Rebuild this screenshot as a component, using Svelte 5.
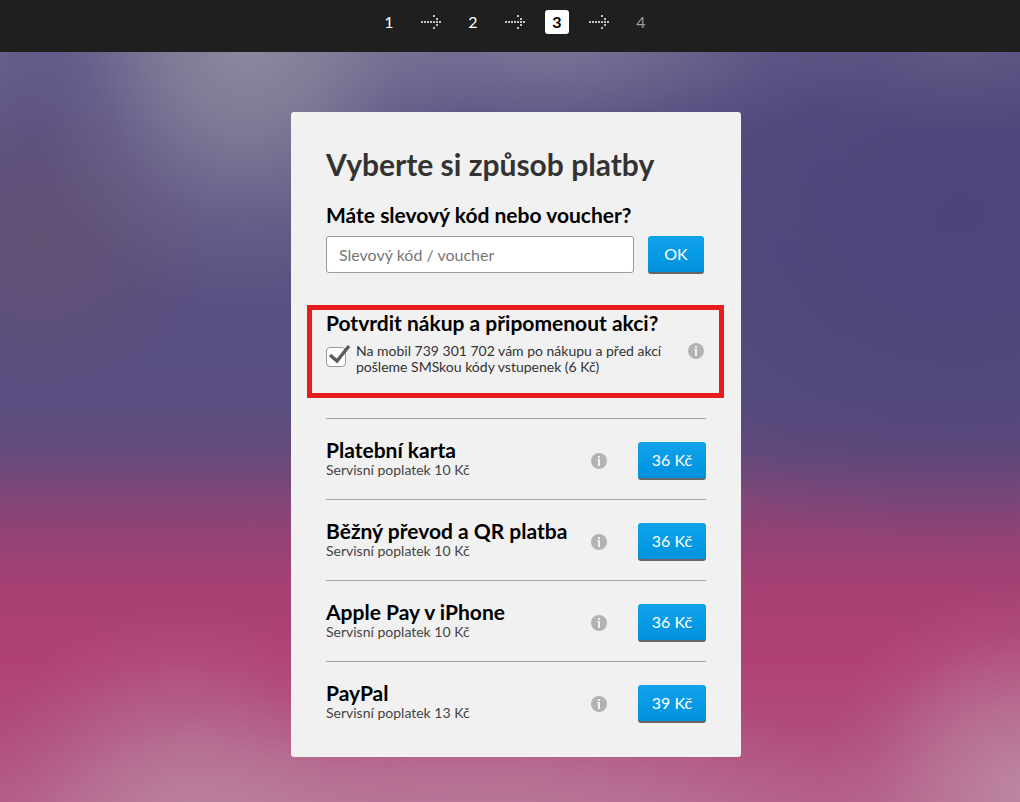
<script lang="ts">
  interface PaymentMethod {
    id: string;
    name: string;
    fee: string;
    price: string;
  }

  const steps = [1, 2, 3, 4];
  const currentStep = 3;

  const methods: PaymentMethod[] = [
    { id: 'card', name: 'Platební karta', fee: '10 Kč', price: '36 Kč' },
    { id: 'transfer', name: 'Běžný převod a QR platba', fee: '10 Kč', price: '36 Kč' },
    { id: 'applepay', name: 'Apple Pay v iPhone', fee: '10 Kč', price: '36 Kč' },
    { id: 'paypal', name: 'PayPal', fee: '13 Kč', price: '39 Kč' }
  ];

  let voucher = $state('');
  let smsReminder = $state(true);
</script>

{#snippet infoButton(label: string)}
  <button type="button" class="info" aria-label={label}>
    <svg viewBox="0 0 16 16" width="16" height="16" aria-hidden="true">
      <circle cx="8" cy="8" r="8" fill="#b3b3b3" />
      <path d="M7 3h2v2H7zM6 6h3v7H7V7H6z" fill="#f1f1f1" />
    </svg>
  </button>
{/snippet}

<div class="page">
  <header class="topbar">
    <ol class="steps">
      {#each steps as step (step)}
        {#if step > 1}
          <li class="arrow" aria-hidden="true">
            <svg viewBox="0 0 20 14" width="20" height="14" fill="#c4c4c4">
              <path d="M0 6h2v2H0zM3 6h2v2H3zM6 6h2v2H6zM9 6h2v2H9zM12 6h2v2h-2zM15 6h2v2h-2zM18 6h2v2h-2zM15 3h2v2h-2zM12 0h2v2h-2zM15 9h2v2h-2zM12 12h2v2h-2z" />
            </svg>
          </li>
        {/if}
        <li
          class="step"
          class:current={step === currentStep}
          class:upcoming={step > currentStep}
          aria-current={step === currentStep ? 'step' : undefined}
        >
          {step}
        </li>
      {/each}
    </ol>
  </header>

  <main class="card">
    <h1>Vyberte si způsob platby</h1>

    <form class="voucher" onsubmit={(e) => e.preventDefault()}>
      <h2><label for="voucher">Máte slevový kód nebo voucher?</label></h2>
      <div class="voucher-row">
        <input id="voucher" type="text" placeholder="Slevový kód / voucher" bind:value={voucher} />
        <button type="submit" class="btn btn-ok">OK</button>
      </div>
    </form>

    <section class="reminder">
      <h2>Potvrdit nákup a připomenout akci?</h2>
      <div class="reminder-row">
        <span class="checkbox">
          <input id="sms" type="checkbox" bind:checked={smsReminder} />
          <svg viewBox="0 0 26 22" width="26" height="22" aria-hidden="true">
            <path d="M4 10l7 6L23 1" fill="none" stroke="#5c5c5c" stroke-width="3.4" />
          </svg>
        </span>
        <label for="sms">
          Na mobil 739 301 702 vám po nákupu a před akcí pošleme SMSkou kódy vstupenek (6 Kč)
        </label>
        {@render infoButton('Informace o SMS')}
      </div>
    </section>

    <ul class="methods">
      {#each methods as method (method.id)}
        <li class="method">
          <div class="method-text">
            <h2>{method.name}</h2>
            <p>Servisní poplatek {method.fee}</p>
          </div>
          {@render infoButton(`Informace: ${method.name}`)}
          <button type="button" class="btn btn-price">{method.price}</button>
        </li>
      {/each}
    </ul>
  </main>
</div>

<style>
  :global(body) {
    margin: 0;
  }

  .page {
    display: flex;
    flex-direction: column;
    align-items: center;
    min-height: 100vh;
    box-sizing: border-box;
    padding-bottom: 45px;
    font-family: Lato, 'Liberation Sans', sans-serif;
    color: #000;
    background:
      radial-gradient(ellipse 230px 290px at 24% 30px, rgba(150, 147, 162, 0.85), rgba(150, 147, 162, 0.6) 35%, rgba(150, 147, 162, 0.18) 70%, transparent),
      radial-gradient(ellipse 340px 110px at 53% 45px, rgba(145, 140, 160, 0.55), rgba(145, 140, 160, 0.34) 35%, rgba(145, 140, 160, 0.1) 70%, transparent),
      radial-gradient(ellipse 200px 90px at 94% 40px, rgba(125, 118, 145, 0.35), rgba(125, 118, 145, 0.2) 40%, transparent),
      radial-gradient(ellipse 60px 120px at 0 50px, rgba(125, 118, 145, 0.3), transparent),
      radial-gradient(ellipse 170px 150px at 4% 240px, rgba(106, 84, 104, 0.5), rgba(106, 84, 104, 0.3) 50%, transparent),
      radial-gradient(ellipse 420px 330px at 94% 215px, rgba(72, 64, 118, 0.7), rgba(72, 64, 118, 0.5) 50%, transparent),
      radial-gradient(ellipse 210px 230px at 18% 830px, rgba(188, 145, 168, 0.65), rgba(188, 145, 168, 0.4) 40%, rgba(188, 145, 168, 0.12) 75%, transparent),
      radial-gradient(ellipse 460px 150px at 46% 830px, rgba(188, 145, 168, 0.6), rgba(188, 145, 168, 0.4) 40%, rgba(188, 145, 168, 0.12) 75%, transparent),
      radial-gradient(ellipse 200px 210px at 100% 790px, rgba(190, 145, 168, 0.8), rgba(190, 145, 168, 0.48) 40%, rgba(190, 145, 168, 0.12) 75%, transparent),
      linear-gradient(
        #5e5487 52px,
        #5a5083 140px,
        #584e81 300px,
        #5a4e80 400px,
        #644a7c 450px,
        #7c4779 490px,
        #954275 540px,
        #a64073 590px,
        #b04175 660px,
        #b04c7c 730px,
        #b45a86 802px
      );
  }

  .topbar {
    display: flex;
    align-items: flex-start;
    justify-content: center;
    width: 100%;
    height: 52px;
    box-sizing: border-box;
    padding: 10px 0 0 10px;
    background: #1f1f1f;
  }

  .steps {
    display: flex;
    gap: 20px;
    margin: 0;
    padding: 0;
    list-style: none;
    color: #fff;
    font-size: 16px;
    line-height: 24px;
  }

  .step {
    width: 24px;
    height: 24px;
    border-radius: 3px;
    text-align: center;
  }

  .step.current {
    background: #fff;
    color: #000;
    font-weight: 700;
  }

  .step.upcoming {
    color: #a39b8b;
  }

  .arrow {
    display: flex;
    align-items: center;
  }

  .card {
    width: 450px;
    box-sizing: border-box;
    margin: 60px 0 0 12px;
    padding: 34px 35px 15px;
    border-radius: 3px;
    background: #f1f1f1;
  }

  h1 {
    margin: 0 0 21px;
    color: #333;
    font-size: 30px;
    line-height: 36px;
  }

  h2 {
    margin: 0;
    font-size: 21px;
    line-height: 24px;
    font-weight: 700;
  }

  .voucher-row {
    display: flex;
    align-items: flex-start;
    gap: 14px;
    margin-top: 9px;
    padding-right: 2px;
  }

  .voucher-row input {
    flex: 1;
    min-width: 0;
    height: 37px;
    box-sizing: border-box;
    padding: 0 12px;
    border: 1px solid #999;
    border-radius: 3px;
    background: #fff;
    font: inherit;
    font-size: 16px;
  }

  .voucher-row input::placeholder {
    color: #777;
    opacity: 1;
  }

  .btn {
    height: 38px;
    padding: 0 0 2px;
    border: 0;
    border-bottom: 2px solid #666;
    border-radius: 3px;
    background: linear-gradient(#10a3ec, #0092dd);
    color: #fff;
    font-family: inherit;
    font-size: 16px;
    cursor: pointer;
  }

  .btn-ok {
    width: 56px;
  }

  .btn-price {
    width: 68px;
  }

  .reminder {
    margin: 31px -18px 0 -19px;
    padding: 1px 13px 18px 14px;
    border: 5px solid #e81c1c;
  }

  .reminder-row {
    display: flex;
    align-items: flex-start;
    margin-top: 8px;
    padding-right: 2px;
  }

  .reminder-row label {
    flex: 1;
    padding-right: 20px;
    color: #333;
    font-size: 14px;
    line-height: 16px;
  }

  .checkbox {
    position: relative;
    width: 30px;
    height: 24px;
  }

  .checkbox input {
    appearance: none;
    width: 20px;
    height: 20px;
    margin: 4px 0 0;
    border: 1px solid #999;
    border-radius: 4px;
    background: #fff;
  }

  .checkbox svg {
    position: absolute;
    top: 2px;
    left: 0;
    display: none;
    pointer-events: none;
  }

  .checkbox input:checked + svg {
    display: block;
  }

  .info {
    width: 16px;
    height: 16px;
    padding: 0;
    border: 0;
    background: none;
    cursor: pointer;
  }

  .info svg {
    display: block;
  }

  .methods {
    margin: 20px 0 0;
    padding: 0;
    list-style: none;
  }

  .method {
    display: flex;
    align-items: center;
    height: 81px;
    box-sizing: border-box;
    padding-top: 4px;
    border-top: 1px solid #a6a6a6;
  }

  .method-text {
    flex: 1;
    padding-bottom: 6px;
  }

  .method p {
    margin: 0;
    color: #444;
    font-size: 14px;
    line-height: 16px;
  }

  .method .info {
    margin-right: 31px;
  }
</style>
